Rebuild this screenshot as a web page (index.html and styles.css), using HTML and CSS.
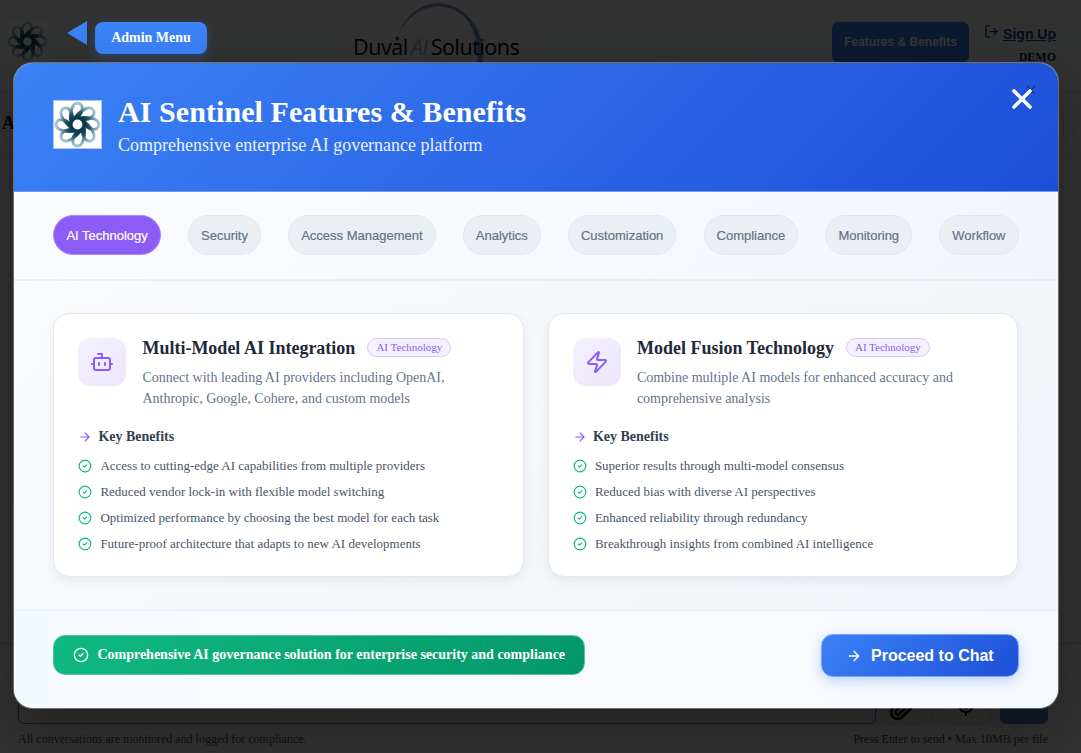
FILE: index.html
```html
<!DOCTYPE html>
<html lang="en">
<head>
<meta charset="utf-8">
<title>AI Sentinel Features &amp; Benefits</title>
<link rel="stylesheet" href="styles.css">
</head>
<body>
<svg class="defs" aria-hidden="true">
  <defs>
    <radialGradient id="petal" gradientUnits="userSpaceOnUse" cx="24" cy="24" r="24">
      <stop offset=".35" stop-color="#0c3b50"/><stop offset=".55" stop-color="#2d5a6e"/><stop offset=".78" stop-color="#86afbf"/><stop offset="1" stop-color="#b4d5e1"/>
    </radialGradient>
    <g id="leaf" fill="none" stroke="url(#petal)" stroke-width="3"><path d="M17.500 24C15.500 13 18 2 24 2c7 0 7.500 12-4.500 17"/></g>
    <symbol id="flower" viewBox="0 0 48 48">
      <rect width="48" height="48" fill="#fff"/>
      <use href="#leaf"/><use href="#leaf" transform="rotate(45 24 24)"/><use href="#leaf" transform="rotate(90 24 24)"/><use href="#leaf" transform="rotate(135 24 24)"/><use href="#leaf" transform="rotate(180 24 24)"/><use href="#leaf" transform="rotate(225 24 24)"/><use href="#leaf" transform="rotate(270 24 24)"/><use href="#leaf" transform="rotate(315 24 24)"/>
      <circle cx="24" cy="24" r="6" fill="#fff" stroke="#0c3b50" stroke-width="2"/>
    </symbol>
    <symbol id="check" viewBox="0 0 24 24"><circle cx="12" cy="12" r="10"/><path d="m9 12 2 2 4-4"/></symbol>
    <symbol id="arrow" viewBox="0 0 24 24"><path d="M5 12h14M12 5l7 7-7 7"/></symbol>
  </defs>
</svg>

<div class="app">
  <header class="app-header">
    <svg class="app-logo"><use href="#flower"/></svg>
    <div class="brand">
      <svg class="brand-arc" viewBox="0 0 200 92"><path d="M57 34C66 8 88 1 104 4c23 5 37 28 37 48l-1 18h-5c3-28-3-58-33-63-21-3-37 10-45 27Z" fill="#7f9dc5"/><circle cx="55.500" cy="38.500" r="2" fill="#2a6cb0"/></svg>
      <span class="brand-name"><span>Duval</span><i>AI</i><span>Solutions</span></span>
      <span class="brand-tag">AI-Powered Strategies for Tomorrow's Success</span>
    </div>
    <div class="features">Features &amp; Benefits</div>
    <div class="account">
      <div class="signup"><svg viewBox="0 0 24 24"><path d="M9 21H5a2 2 0 0 1-2-2V5a2 2 0 0 1 2-2h4M16 17l5-5-5-5M21 12H9"/></svg><a>Sign Up</a></div>
      <b>DEMO</b>
    </div>
  </header>
  <div class="subbar"><b>AI Sentinel</b><span class="pick"></span></div>
  <main class="chat"></main>
  <footer class="composer">
    <div class="row">
      <div class="input"></div>
      <div class="tool"><svg class="clip" viewBox="0 0 24 24"><path d="m21.400 11.100-9.200 9.200a6 6 0 0 1-8.500-8.500l9.200-9.200a4 4 0 0 1 5.700 5.700l-9.200 9.200a2 2 0 0 1-2.800-2.900l8.500-8.400"/></svg></div>
      <div class="tool mic"><svg viewBox="0 0 24 24"><path d="M12 2a3 3 0 0 0-3 3v7a3 3 0 0 0 6 0V5a3 3 0 0 0-3-3ZM19 10v2a7 7 0 0 1-14 0v-2M12 19v3"/></svg></div>
      <div class="send"><svg viewBox="0 0 24 24"><path d="m22 2-7 20-4-9-9-4Z"/></svg></div>
    </div>
    <div class="notes"><span class="n1">All conversations are monitored and logged for compliance.</span><span class="n2">Press Enter to send • Max 10MB per file</span></div>
  </footer>
</div>

<div class="overlay">
  <svg class="pointer" viewBox="0 0 20 24"><path d="M0 12 20 0v24Z" fill="#3b82f6"/></svg>
  <div class="admin">Admin Menu</div>
  <section class="modal">
    <header class="modal-header">
      <svg class="modal-logo"><use href="#flower"/></svg>
      <div><h1>AI Sentinel Features &amp; Benefits</h1><p>Comprehensive enterprise AI governance platform</p></div>
      <svg class="close-small" viewBox="0 0 10 10"><path d="m1 1 8 8M9 1 1 9"/></svg>
      <svg class="close" viewBox="0 0 22 22"><path d="m3 3 16 16M19 3 3 19"/></svg>
    </header>
    <nav class="tabs">
      <span class="tab active">AI Technology</span><span class="tab">Security</span><span class="tab">Access Management</span><span class="tab">Analytics</span><span class="tab">Customization</span><span class="tab">Compliance</span><span class="tab">Monitoring</span><span class="tab">Workflow</span>
    </nav>
    <div class="cards">
      <article class="card">
        <div class="top">
          <div class="icon"><svg viewBox="0 0 24 24"><path d="M12 8V4H8"/><rect width="16" height="12" x="4" y="8" rx="2"/><path d="M2 14h2M20 14h2M15 13v2M9 13v2"/></svg></div>
          <div><h2><span>Multi-Model AI Integration</span><small>AI Technology</small></h2><p>Connect with leading AI providers including OpenAI,<br>Anthropic, Google, Cohere, and custom models</p></div>
        </div>
        <h3><svg><use href="#arrow"/></svg>Key Benefits</h3>
        <ul>
          <li><svg><use href="#check"/></svg><span>Access to cutting-edge AI capabilities from multiple providers</span></li>
          <li><svg><use href="#check"/></svg><span>Reduced vendor lock-in with flexible model switching</span></li>
          <li><svg><use href="#check"/></svg><span>Optimized performance by choosing the best model for each task</span></li>
          <li><svg><use href="#check"/></svg><span>Future-proof architecture that adapts to new AI developments</span></li>
        </ul>
      </article>
      <article class="card">
        <div class="top">
          <div class="icon"><svg viewBox="0 0 24 24"><path d="M4 14a1 1 0 0 1-.78-1.630l9.900-10.200a.5.5 0 0 1 .86.460l-1.920 6.020A1 1 0 0 0 13 10h7a1 1 0 0 1 .78 1.630l-9.900 10.200a.5.5 0 0 1-.86-.460l1.920-6.020A1 1 0 0 0 11 14z"/></svg></div>
          <div><h2><span>Model Fusion Technology</span><small>AI Technology</small></h2><p>Combine multiple AI models for enhanced accuracy and<br>comprehensive analysis</p></div>
        </div>
        <h3><svg><use href="#arrow"/></svg>Key Benefits</h3>
        <ul>
          <li><svg><use href="#check"/></svg><span>Superior results through multi-model consensus</span></li>
          <li><svg><use href="#check"/></svg><span>Reduced bias with diverse AI perspectives</span></li>
          <li><svg><use href="#check"/></svg><span>Enhanced reliability through redundancy</span></li>
          <li><svg><use href="#check"/></svg><span>Breakthrough insights from combined AI intelligence</span></li>
        </ul>
      </article>
    </div>
    <footer class="modal-footer">
      <div class="promise"><svg><use href="#check"/></svg><span>Comprehensive AI governance solution for enterprise security and compliance</span></div>
      <div class="proceed"><svg><use href="#arrow"/></svg><span>Proceed to Chat</span></div>
    </footer>
  </section>
</div>
</body>
</html>
```
FILE: styles.css
```css
* { box-sizing: border-box; margin: 0; padding: 0; }
body { width: 1081px; height: 753px; overflow: hidden; font-family: "Liberation Serif", serif; color: #1e293b; }
svg { flex: none; fill: none; stroke: currentColor; stroke-width: 2; stroke-linecap: round; stroke-linejoin: round; }
.defs { position: absolute; width: 0; height: 0; }
.app { height: 753px; display: flex; flex-direction: column; background: #f5f5f5; }
.app-header { height: 93px; display: flex; align-items: flex-start; border-bottom: 1px solid #ddd; background: linear-gradient(#f1f5f9, #fafafa); padding: 0 25px 0 7px; }
.app-logo { width: 41px; height: 41px; margin-top: 21px; stroke: none; opacity: .9; }
.brand { display: grid; width: 200px; height: 92px; margin-left: 294px; background: #fafafa; border-radius: 8px; }
.brand > * { grid-area: 1 / 1; }
.brand-arc { width: 200px; height: 92px; stroke: none; }
.brand-name { display: flex; align-items: flex-start; gap: 3px; font: 21.500px/26px "Open Sans", sans-serif; letter-spacing: -.45px; padding: 34px 0 0 11px; white-space: nowrap; color: #000; }
.brand-name i { color: #9fb4cb; }
.brand-tag { font: 9px/12px "Liberation Sans", sans-serif; padding: 60px 0 0 7px; color: #7f9dc5; white-space: nowrap; overflow: hidden; }
.features { margin: 22px 0 0 290px; width: 137px; height: 40px; border-radius: 6px; background: #3b82f6; color: #fff; font: bold 12px/40px "Liberation Sans", sans-serif; text-align: center; }
.account { flex: 1; display: flex; flex-direction: column; align-items: flex-end; margin-top: 24px; color: #1e40af; }
.account b { font-size: 12px; line-height: 15px; margin-top: 6px; color: #172554; }
.signup { display: flex; gap: 4px; font: bold 14px/20px "Liberation Sans", sans-serif; text-decoration: underline; white-space: nowrap; }
.signup svg { width: 15px; height: 15px; }
.subbar { height: 61px; display: flex; justify-content: space-between; align-items: center; padding: 0 17px 0 2px; border-bottom: 1px solid #ddd; background: #fafafa; font-size: 18px; color: #000; }
.pick { width: 60px; height: 35px; border: 1px solid #ddd; border-radius: 6px; }
.chat { flex: 1; }
.composer { height: 110px; border-top: 1px solid #ccc; padding: 31px 32px 0 18px; background: #fafafa; }
.row { display: flex; height: 49px; }
.row svg { width: 24px; height: 24px; }
.input { width: 858px; border: 1px solid #5984b8; border-radius: 6px; }
.tool { width: 57px; border: 1px solid #ddd; border-radius: 6px; color: #000; display: flex; justify-content: center; align-items: flex-end; padding: 0 5px 2px 0; }
.mic { width: 50px; margin-left: 8px; padding: 0 0 6px; }
.send { width: 48px; margin-left: 9px; background: #5f7fd0; border-radius: 6px; color: #fff; display: flex; align-items: center; justify-content: center; }
.send svg { opacity: .3; }
.row .clip { width: 26px; height: 26px; stroke-width: 2.500; }
.notes { display: flex; justify-content: space-between; font-size: 12px; line-height: 14px; margin: 8px 1px 0 0; color: #475569; }

.overlay { position: absolute; inset: 0; background: rgba(0, 0, 0, .8); padding: 62px 22px 0 13px; }
.pointer { position: absolute; left: 67px; top: 21px; width: 20px; height: 24px; stroke: none; }
.admin { position: absolute; left: 95px; top: 22px; width: 112px; height: 32px; border-radius: 8px; background: #3b82f6; color: #fff; font-weight: bold; font-size: 14px; line-height: 31px; text-align: center; box-shadow: 0 4px 12px rgba(59, 130, 246, .3); }
.modal { position: relative; width: 1046px; height: 647px; border: 1px solid rgba(255, 255, 255, .3); border-radius: 20px; background: linear-gradient(135deg, #f8fafc, #f1f5f9); background-clip: padding-box; overflow: hidden; display: flex; flex-direction: column; box-shadow: 0 20px 50px rgba(0, 0, 0, .3); }
.modal-header { flex: none; height: 129px; display: flex; align-items: flex-start; gap: 16px; padding: 30px 25px 0 39px; background: linear-gradient(135deg, #3b82f6, #1d4ed8); border-bottom: 1px solid #6f98f1; color: #fff; }
.modal-logo { width: 49px; height: 49px; margin-top: 7px; stroke: none; border: 1px solid #adc8fb; }
h1 { font-size: 30px; line-height: 36px; margin-top: 1px; letter-spacing: .07px; white-space: nowrap; }
.modal-header p { font-size: 18px; line-height: 22px; margin-top: 4px; letter-spacing: -.01px; opacity: .9; }
.close { width: 22px; height: 22px; margin-left: auto; margin-top: -5px; stroke-width: 3.600; z-index: 1; }
.close-small { position: absolute; left: 1012px; top: 22px; width: 10px; height: 10px; stroke: #102450; stroke-width: 1; }
.tabs { flex: none; height: 89px; display: flex; justify-content: space-between; padding: 23.400px 39.500px 0 39.400px; border-bottom: 2px solid #e9eef4; background: linear-gradient(135deg, #fafbff, #f2f6fa); }
.tab { height: 40px; border: 1px solid #e2e8f0; border-radius: 20px; padding: 0 12px; background: #ebeff3; color: #64748b; font: 13px/39px "Liberation Sans", sans-serif; -webkit-text-stroke: .2px currentColor; }
.tab.active { color: #fff; background: #8b5cf6; border-color: #a987f8; }
.cards { flex: none; height: 329px; display: grid; grid-template-columns: 470.500px 470px; gap: 24px; align-items: start; padding: 31.500px 39.400px; background: linear-gradient(135deg, #f8fafc, #f1f5f9); }
.card { height: 264px; border: 1px solid #e2e8f0; border-radius: 16px; background: #fff; padding: 24px; box-shadow: 0 4px 10px rgba(15, 23, 42, .06); }
.top { display: flex; gap: 16px; }
.icon { width: 48px; height: 48px; border-radius: 12px; background: linear-gradient(135deg, #f5f1fe, #ece5fd); color: #8b5cf6; display: flex; align-items: center; justify-content: center; }
.icon svg { width: 24px; height: 24px; }
h2 { display: flex; align-items: center; gap: 12px; height: 20px; font-size: 18px; line-height: 20px; white-space: nowrap; }
h2 small { font-size: 11px; line-height: 17px; font-weight: normal; height: 19px; border: 1px solid #d8c8fc; border-radius: 10px; padding: 0 8px; color: #8b5cf6; background: #f5f0fe; }
.top p { font-size: 14px; line-height: 21px; margin-top: 9.500px; color: #64748b; white-space: nowrap; }
h3 { display: flex; align-items: center; gap: 6px; font-size: 14px; line-height: 18px; margin-top: 19px; color: #334155; }
h3 svg { width: 14px; height: 14px; color: #8b5cf6; }
ul { list-style: none; margin-top: 7px; }
li { display: flex; align-items: center; gap: 8px; height: 26px; font-size: 13px; line-height: 20px; color: #475569; white-space: nowrap; }
li svg { width: 14px; height: 14px; color: #10b981; }
.modal-footer { flex: 1; display: flex; align-items: flex-start; justify-content: space-between; padding: 23.400px 39px 0 39.400px; border-top: 1px solid #e8edf2; background: linear-gradient(90deg, #f5faff, #f9fafe 50%, #f5f9fd); }
.promise { width: 532px; height: 40px; margin-top: 1px; display: flex; align-items: center; gap: 8px; padding: 0 19px; border: 1px solid #54c4a0; border-radius: 12px; background: linear-gradient(135deg, #10b981, #059669) border-box; color: #fff; font-size: 14px; font-weight: bold; white-space: nowrap; }
.promise svg { width: 16px; height: 16px; }
.proceed { width: 198px; height: 43px; display: flex; align-items: center; gap: 9px; padding: 0 24px; border: 1px solid #7ba2f6; border-radius: 12px; background: linear-gradient(135deg, #3b82f6, #1d4ed8) border-box; color: #fff; font: bold 16px "Liberation Sans", sans-serif; white-space: nowrap; box-shadow: 0 4px 12px rgba(59, 130, 246, .3); }
.proceed svg { width: 16px; height: 16px; }
```
